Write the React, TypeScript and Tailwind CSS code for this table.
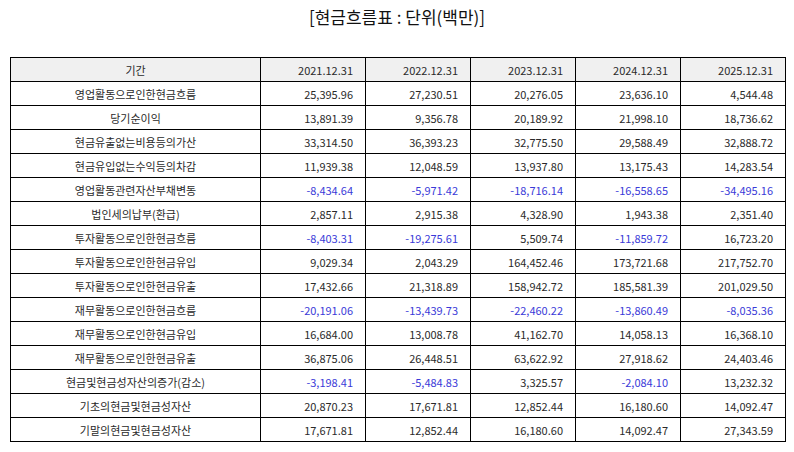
import React from "react";

const years = ["2021.12.31", "2022.12.31", "2023.12.31", "2024.12.31", "2025.12.31"];

const rows: [string, string[]][] = [
  ["영업활동으로인한현금흐름", ["25,395.96", "27,230.51", "20,276.05", "23,636.10", "4,544.48"]],
  ["당기순이익", ["13,891.39", "9,356.78", "20,189.92", "21,998.10", "18,736.62"]],
  ["현금유출없는비용등의가산", ["33,314.50", "36,393.23", "32,775.50", "29,588.49", "32,888.72"]],
  ["현금유입없는수익등의차감", ["11,939.38", "12,048.59", "13,937.80", "13,175.43", "14,283.54"]],
  ["영업활동관련자산부채변동", ["-8,434.64", "-5,971.42", "-18,716.14", "-16,558.65", "-34,495.16"]],
  ["법인세의납부(환급)", ["2,857.11", "2,915.38", "4,328.90", "1,943.38", "2,351.40"]],
  ["투자활동으로인한현금흐름", ["-8,403.31", "-19,275.61", "5,509.74", "-11,859.72", "16,723.20"]],
  ["투자활동으로인한현금유입", ["9,029.34", "2,043.29", "164,452.46", "173,721.68", "217,752.70"]],
  ["투자활동으로인한현금유출", ["17,432.66", "21,318.89", "158,942.72", "185,581.39", "201,029.50"]],
  ["재무활동으로인한현금흐름", ["-20,191.06", "-13,439.73", "-22,460.22", "-13,860.49", "-8,035.36"]],
  ["재무활동으로인한현금유입", ["16,684.00", "13,008.78", "41,162.70", "14,058.13", "16,368.10"]],
  ["재무활동으로인한현금유출", ["36,875.06", "26,448.51", "63,622.92", "27,918.62", "24,403.46"]],
  ["현금및현금성자산의증가(감소)", ["-3,198.41", "-5,484.83", "3,325.57", "-2,084.10", "13,232.32"]],
  ["기초의현금및현금성자산", ["20,870.23", "17,671.81", "12,852.44", "16,180.60", "14,092.47"]],
  ["기말의현금및현금성자산", ["17,671.81", "12,852.44", "16,180.60", "14,092.47", "27,343.59"]],
];

export default function App() {
  return (
    <div
      className="w-[794px] h-[452px] bg-white text-[#2a2a2a]"
      style={{ fontFamily: '"Noto Sans CJK KR", "Noto Sans", sans-serif' }}
    >
      <div className="h-[57px] pt-[5px] text-center text-[17px] leading-[24px] text-[#111]">
        [현금흐름표 : 단위(백만)]
      </div>
      <table className="ml-[10px] w-[775px] border-collapse table-fixed text-[11px] leading-[14px]">
        <colgroup>
          <col className="w-[250px]" />
          <col className="w-[105px]" />
          <col className="w-[105px]" />
          <col className="w-[105px]" />
          <col className="w-[105px]" />
          <col className="w-[105px]" />
        </colgroup>
        <thead>
          <tr className="h-[24px] bg-[#f0f0f0]">
            <th className="border border-black font-normal text-center">기간</th>
            {years.map((y) => (
              <th key={y} className="border border-black font-normal text-right pr-[12px]">
                {y}
              </th>
            ))}
          </tr>
        </thead>
        <tbody>
          {rows.map(([label, vals]) => (
            <tr key={label} className="h-[24px]">
              <td className="border border-black text-center">{label}</td>
              {vals.map((v, i) => (
                <td
                  key={i}
                  className={
                    v.startsWith("-")
                      ? "border border-black text-right pr-[12px] text-[#3a3ad8]"
                      : "border border-black text-right pr-[12px]"
                  }
                >
                  {v}
                </td>
              ))}
            </tr>
          ))}
        </tbody>
      </table>
    </div>
  );
}
